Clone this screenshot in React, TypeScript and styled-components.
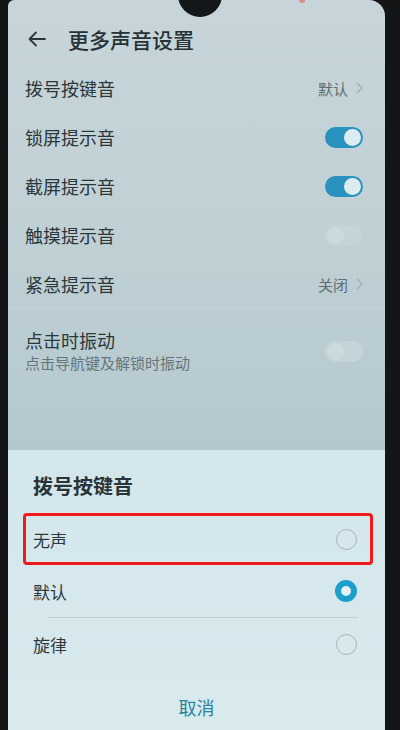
import React from "react";
import styled, {createGlobalStyle} from "styled-components";

const GlobalStyle = createGlobalStyle`
  html, body {
    margin: 0;
    padding: 0;
    background: #131517;
  }
  body {
    font-family: "Noto Sans CJK SC", "Noto Sans", sans-serif;
  }
`;

interface ToggleProps {
  $on?: boolean;
}

interface RadioProps {
  $checked?: boolean;
}

interface OptionProps {
  $outlined?: boolean;
}

const settings = [
  {label: "拨号按键音", value: "默认"},
  {label: "锁屏提示音", toggle: true, on: true},
  {label: "截屏提示音", toggle: true, on: true},
  {label: "触摸提示音", toggle: true, on: false},
  {label: "紧急提示音", value: "关闭"},
];

const options = [
  {label: "无声", checked: false, outlined: true},
  {label: "默认", checked: true},
  {label: "旋律", checked: false},
];

const BackArrow = () => (
  <svg width="18" height="16" viewBox="0 0 18 16" fill="none">
    <path
      d="M17 8H1.5M8 1.5L1.5 8L8 14.5"
      stroke="#2b3739"
      strokeWidth="1.8"
      strokeLinecap="round"
      strokeLinejoin="round"
    />
  </svg>
);

const Chevron = () => (
  <svg width="7" height="12" viewBox="0 0 7 12" fill="none">
    <path d="M1 1L6 6L1 11" stroke="#9fb0b4" strokeWidth="1.3" />
  </svg>
);

const App = () => {
  return (
    <>
      <GlobalStyle />
      <Device>
        <Screen>
          <Notch />
          <StatusBar>
            <StatusDot />
          </StatusBar>

          <Header>
            <BackArrow />
            <Title>更多声音设置</Title>
          </Header>

          {settings.map((item) => (
            <Row key={item.label}>
              <Label>{item.label}</Label>
              {item.toggle ? (
                <Toggle $on={item.on}>
                  <Knob $on={item.on} />
                </Toggle>
              ) : (
                <Value>
                  {item.value}
                  <Chevron />
                </Value>
              )}
            </Row>
          ))}

          <Row $tall>
            <TextStack>
              <Label>点击时振动</Label>
              <Hint>点击导航键及解锁时振动</Hint>
            </TextStack>
            <Toggle>
              <Knob />
            </Toggle>
          </Row>

          <Dialog>
            <DialogTitle>拨号按键音</DialogTitle>
            {options.map((opt, i) => (
              <React.Fragment key={opt.label}>
                {i === 2 && <OptionDivider />}
                <Option $outlined={opt.outlined}>
                  <OptionLabel>{opt.label}</OptionLabel>
                  <Radio $checked={opt.checked} />
                </Option>
              </React.Fragment>
            ))}
            <Cancel>取消</Cancel>
          </Dialog>
        </Screen>
      </Device>
    </>
  );
};

export default App;

const Device = styled.div`
  width: 400px;
  height: 730px;
  box-sizing: border-box;
  padding: 0 15px 0 8px;
  display: flex;
  background: #131517;
  overflow: hidden;
`;

const Screen = styled.div`
  position: relative;
  flex: 1;
  display: flex;
  flex-direction: column;
  background: linear-gradient(180deg, #c7d5da 0%, #bfd0d5 35%, #b3c8cd 62%);
  border-top-left-radius: 6px;
  border-top-right-radius: 16px;
  overflow: hidden;
`;

const Notch = styled.div`
  position: absolute;
  top: -27px;
  left: 170px;
  width: 44px;
  height: 44px;
  border-radius: 50%;
  background: #15181a;
`;

const StatusBar = styled.div`
  height: 14px;
  display: flex;
  justify-content: flex-end;
  padding-right: 80px;
`;

const StatusDot = styled.div`
  width: 6px;
  height: 3px;
  background: #e0908a;
  border-radius: 0 0 2px 2px;
`;

const Header = styled.div`
  height: 50px;
  display: flex;
  align-items: center;
  gap: 22px;
  padding-left: 20px;
`;

const Title = styled.h1`
  margin: 0;
  font-size: 21px;
  font-weight: 500;
  color: #263235;
  line-height: 26px;
`;

const Row = styled.div<{$tall?: boolean}>`
  height: ${(p) => (p.$tall ? "auto" : "49px")};
  padding: ${(p) => (p.$tall ? "19px 22px 19px 17px" : "0 22px 0 17px")};
  display: flex;
  align-items: center;
  justify-content: space-between;
  box-sizing: border-box;
  border-bottom: 1px solid ${(p) => (p.$tall ? "transparent" : "#c3d3d7")};
`;

const Label = styled.div`
  font-size: 18px;
  line-height: 24px;
  color: #2b3739;
`;

const TextStack = styled.div`
  display: flex;
  flex-direction: column;
`;

const Hint = styled.div`
  font-size: 15px;
  line-height: 22px;
  color: #66767a;
`;

const Value = styled.div`
  display: flex;
  align-items: center;
  gap: 8px;
  font-size: 15px;
  color: #5f6d71;
`;

const Toggle = styled.div<ToggleProps>`
  width: 38px;
  height: 21px;
  box-sizing: border-box;
  padding: 2px;
  border-radius: 11px;
  display: flex;
  justify-content: ${(p) => (p.$on ? "flex-end" : "flex-start")};
  background: ${(p) => (p.$on ? "#2a92be" : "#c4d4d8")};
`;

const Knob = styled.div<ToggleProps>`
  width: 17px;
  height: 17px;
  border-radius: 50%;
  background: ${(p) => (p.$on ? "#dcecf0" : "#cbdadd")};
`;

const Dialog = styled.div`
  margin-top: auto;
  height: 280px;
  box-sizing: border-box;
  padding-top: 23px;
  display: flex;
  flex-direction: column;
  background: linear-gradient(180deg, #d3e6eb 0%, #d8eaee 100%);
`;

const DialogTitle = styled.h2`
  margin: 0 0 14px 25px;
  font-size: 20px;
  line-height: 26px;
  font-weight: 600;
  color: #283437;
`;

const Option = styled.div<OptionProps>`
  height: 52px;
  margin: 0 12px 0 15px;
  padding: 0 13px 0 7px;
  box-sizing: border-box;
  display: flex;
  align-items: center;
  justify-content: space-between;
  border: 3px solid ${(p) => (p.$outlined ? "#f0191b" : "transparent")};
  border-radius: 4px;
`;

const OptionLabel = styled.span`
  font-size: 17px;
  color: #2d393c;
`;

const Radio = styled.div<RadioProps>`
  width: ${(p) => (p.$checked ? "22px" : "21px")};
  height: ${(p) => (p.$checked ? "22px" : "21px")};
  box-sizing: border-box;
  border-radius: 50%;
  border: ${(p) => (p.$checked ? "6px solid #1e9fc9" : "1.5px solid #a3b2b5")};
  background: ${(p) => (p.$checked ? "#e4f2f5" : "transparent")};
`;

const OptionDivider = styled.div`
  height: 1px;
  margin: 0 27px 0 40px;
  background: #bfd0d4;
`;

const Cancel = styled.div`
  padding-top: 25px;
  text-align: center;
  font-size: 18px;
  line-height: 24px;
  color: #2b839d;
`;
